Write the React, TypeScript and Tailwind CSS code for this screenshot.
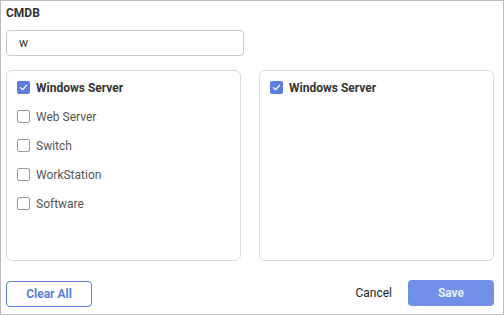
import { useState } from 'react';

const items = ['Windows Server', 'Web Server', 'Switch', 'WorkStation', 'Software'];

function Box({ checked }: { checked: boolean }) {
  return checked ? (
    <span className="w-[13px] h-[13px] rounded-[2px] bg-[#5b7fe0] flex items-center justify-center shrink-0">
      <svg width="9" height="9" viewBox="0 0 10 10" fill="none">
        <path d="M1.5 5.2 L4 7.5 L8.5 2.5" stroke="white" strokeWidth="1.3" strokeLinecap="round" strokeLinejoin="round" />
      </svg>
    </span>
  ) : (
    <span className="w-[13px] h-[13px] rounded-[2px] border border-[#9a9a9a] bg-white shrink-0" />
  );
}

export default function App() {
  const [query, setQuery] = useState('w');
  const [selected] = useState<string[]>(['Windows Server']);

  return (
    <div
      className="w-[504px] h-[315px] border border-[#bdbdbd] bg-white pl-[5px] pr-[9px] flex flex-col"
      style={{ fontFamily: 'Roboto, "Liberation Sans", sans-serif' }}
    >
      {/* Title */}
      <div className="pt-[5px] h-[29px] text-[12px] font-bold text-[#333] leading-[14px]">CMDB</div>

      {/* Search */}
      <input
        type="text"
        value={query}
        onChange={(e) => setQuery(e.target.value)}
        className="w-[238px] h-[26px] border border-[#c8c8c8] rounded-[4px] px-3 text-[12px] text-[#333] focus:outline-none"
      />

      {/* Lists */}
      <div className="flex gap-[18px] mt-[14px]">
        <div className="w-[235px] h-[191px] border border-[#dcdcdc] rounded-[6px] pt-[2px] px-[10px]">
          {items.map((item) => {
            const on = selected.includes(item);
            return (
              <div key={item} className="flex items-center gap-[6px] h-[29px]">
                <Box checked={on} />
                <span className={on ? 'text-[12px] font-bold text-[#333]' : 'text-[12px] text-[#555]'}>{item}</span>
              </div>
            );
          })}
        </div>
        <div className="w-[235px] h-[191px] border border-[#dcdcdc] rounded-[6px] pt-[2px] px-[10px]">
          {selected.map((item) => (
            <div key={item} className="flex items-center gap-[6px] h-[29px]">
              <Box checked />
              <span className="text-[12px] font-bold text-[#333]">{item}</span>
            </div>
          ))}
        </div>
      </div>

      {/* Footer */}
      <div className="flex items-center justify-between mt-[18px]">
        <button className="w-[86px] h-[26px] mt-[2px] border border-[#5b7fe0] rounded-[4px] text-[12px] font-bold text-[#5b7fe0] bg-white">
          Clear All
        </button>
        <div className="flex items-center gap-[16px]">
          <button className="text-[12px] text-[#222]">Cancel</button>
          <button className="w-[86px] h-[26px] rounded-[4px] bg-[#7090e8] text-[12px] font-bold text-[#e8eeff]">
            Save
          </button>
        </div>
      </div>
    </div>
  );
}
